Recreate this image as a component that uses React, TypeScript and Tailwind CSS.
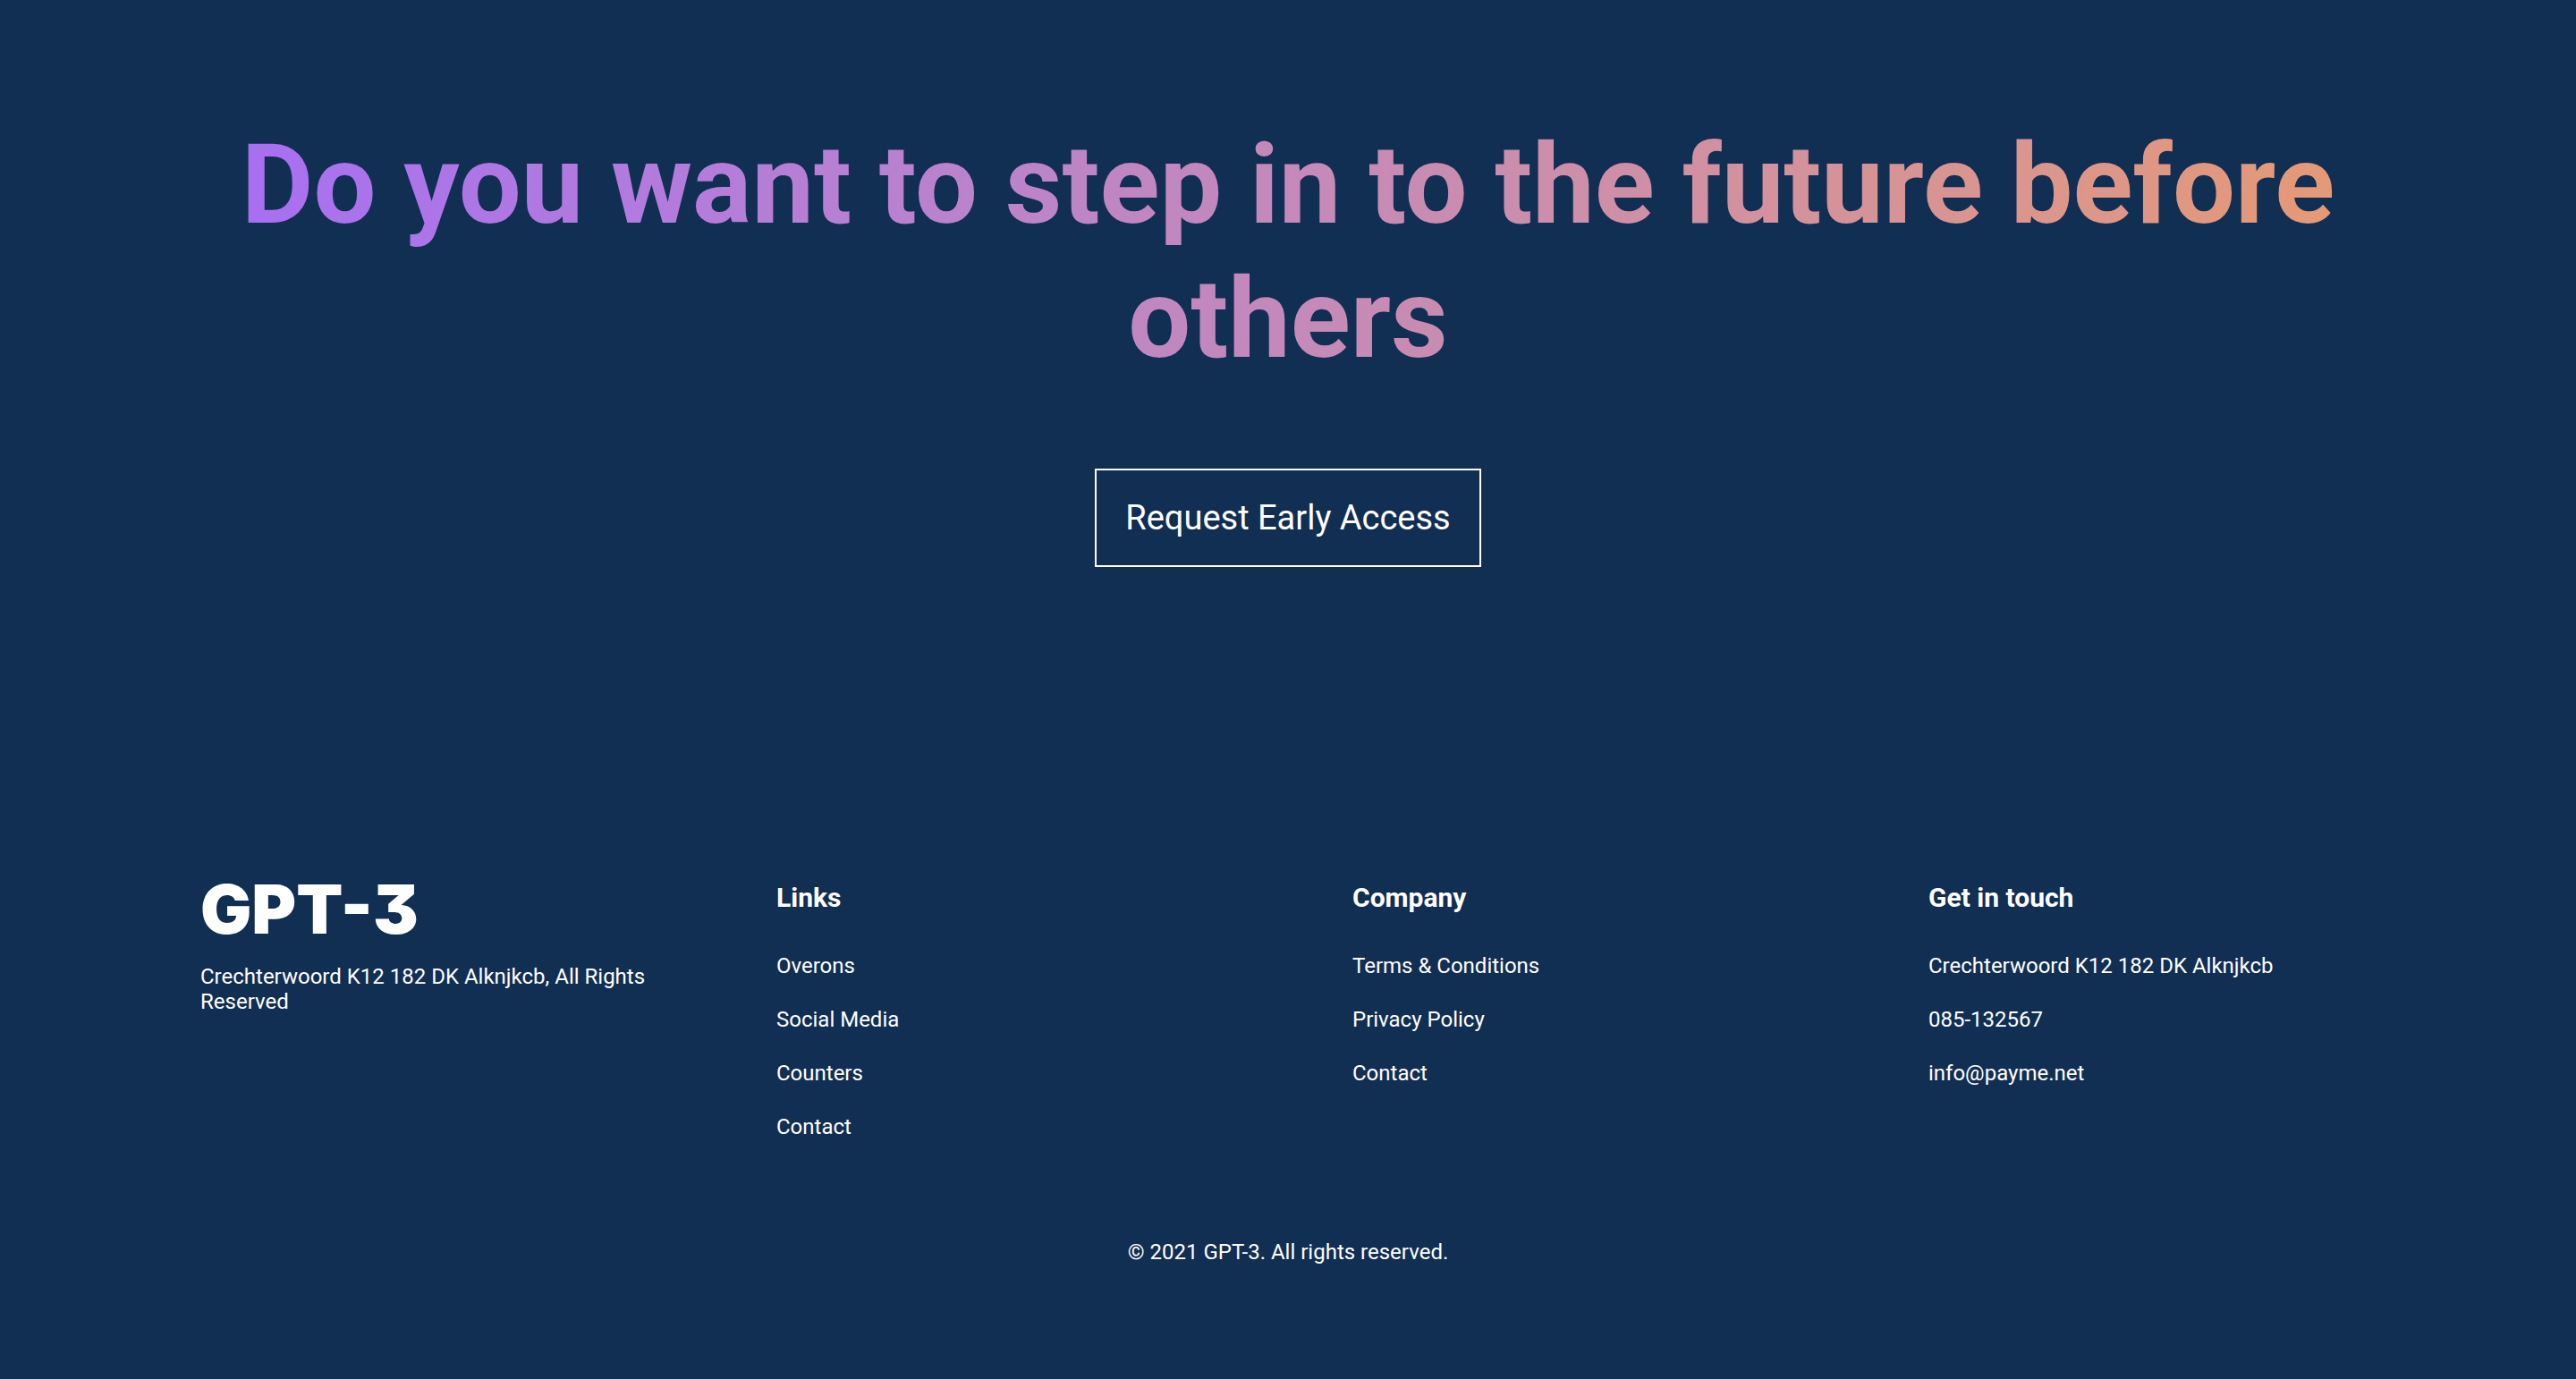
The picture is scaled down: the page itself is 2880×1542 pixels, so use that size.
type Column = { title: string; items: { label: string; href?: string }[] };

const columns: Column[] = [
  {
    title: "Links",
    items: [
      { label: "Overons", href: "#overons" },
      { label: "Social Media", href: "#social" },
      { label: "Counters", href: "#counters" },
      { label: "Contact", href: "#contact" },
    ],
  },
  {
    title: "Company",
    items: [
      { label: "Terms & Conditions", href: "#terms" },
      { label: "Privacy Policy", href: "#privacy" },
      { label: "Contact", href: "#company-contact" },
    ],
  },
  {
    title: "Get in touch",
    items: [
      { label: "Crechterwoord K12 182 DK Alknjkcb" },
      { label: "085-132567", href: "tel:085132567" },
      { label: "info@payme.net", href: "mailto:info@payme.net" },
    ],
  },
];

function FooterColumn({ title, items }: Column) {
  return (
    <div>
      <h2 className="mb-11 text-[30px] leading-9 font-bold">{title}</h2>
      <ul className="flex flex-col gap-8">
        {items.map(({ label, href }) => (
          <li key={label}>{href ? <a href={href}>{label}</a> : label}</li>
        ))}
      </ul>
    </div>
  );
}

export default function App() {
  return (
    <footer className="flex min-h-screen flex-col items-center bg-[#112e53] px-48 pt-[132px] pb-28 font-['Roboto',sans-serif] text-[24px] leading-7 text-white">
      <h1 className="mb-[92px] w-full bg-linear-to-r from-[#a66df4] to-[#e79a70] bg-clip-text text-center text-[124px] leading-[150px] font-bold text-transparent">
        Do you want to step in to the future before others
      </h1>
      <button
        type="button"
        className="mb-[352px] border-2 border-white px-8 py-8 text-[38px] leading-[42px]"
      >
        Request Early Access
      </button>
      <div className="grid w-full grid-cols-4 gap-36 px-8">
        <div>
          <p className="mb-8 font-['Inter',sans-serif] text-[76px] leading-[60px] font-black [font-feature-settings:'cv09']">
            GPT-3
          </p>
          <p>Crechterwoord K12 182 DK Alknjkcb, All Rights Reserved</p>
        </div>
        {columns.map((column) => (
          <FooterColumn key={column.title} {...column} />
        ))}
      </div>
      <p className="mt-28">© 2021 GPT-3. All rights reserved.</p>
    </footer>
  );
}
